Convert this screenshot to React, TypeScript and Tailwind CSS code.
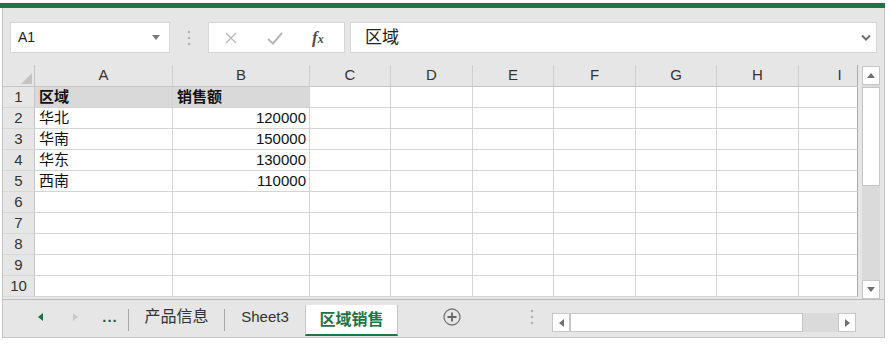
const cols = [
  { l: 'A', w: 'w-[138px]' },
  { l: 'B', w: 'w-[137px]' },
  { l: 'C', w: 'w-[81px]' },
  { l: 'D', w: 'w-[82px]' },
  { l: 'E', w: 'w-[81px]' },
  { l: 'F', w: 'w-[82px]' },
  { l: 'G', w: 'w-[81px]' },
  { l: 'H', w: 'w-[82px]' },
  { l: 'I', w: 'w-[59px]' },
];

const data = [
  ['区域', '销售额'],
  ['华北', '120000'],
  ['华南', '150000'],
  ['华东', '130000'],
  ['西南', '110000'],
];

const Tri = ({ dir, color }: { dir: 'up' | 'down' | 'left' | 'right'; color: string }) => {
  const pts = {
    up: '0,5 8,5 4,0',
    down: '0,0 8,0 4,5',
    left: '5,0 5,8 0,4',
    right: '0,0 0,8 5,4',
  }[dir];
  const horiz = dir === 'up' || dir === 'down';
  return (
    <svg width={horiz ? 8 : 5} height={horiz ? 5 : 8} viewBox={horiz ? '0 0 8 5' : '0 0 5 8'}>
      <polygon points={pts} fill={color} />
    </svg>
  );
};

const VDots = () => (
  <svg width="4" height="16" viewBox="0 0 4 16">
    <circle cx="2" cy="2" r="1.3" fill="#b4b4b4" />
    <circle cx="2" cy="8" r="1.3" fill="#b4b4b4" />
    <circle cx="2" cy="14" r="1.3" fill="#b4b4b4" />
  </svg>
);

const FormulaBar = () => (
  <div className="flex items-start h-[57px] pt-[14px] pl-[7px]">
    {/* 名称框 */}
    <div className="w-[160px] h-[31px] bg-white border border-[#d6d6d6] flex items-center justify-between pl-[7px] pr-[9px]">
      <span className="text-[14px] text-[#222]">A1</span>
      <Tri dir="down" color="#7a7a7a" />
    </div>
    <div className="w-[38px] h-[31px] flex items-center justify-center">
      <VDots />
    </div>
    <div className="w-[137px] h-[31px] bg-white border border-[#d6d6d6] flex items-center pl-[13px]">
      <svg width="18" height="18" viewBox="0 0 18 18">
        <path d="M4 4 L14 14 M14 4 L4 14" stroke="#b8b8b8" strokeWidth="1.4" fill="none" />
      </svg>
      <svg width="18" height="18" viewBox="0 0 18 18" className="ml-[26px]">
        <path d="M2 10 L7 14.5 L16 4" stroke="#b8b8b8" strokeWidth="2" fill="none" />
      </svg>
      <span className="ml-[28px] font-['Liberation_Serif',serif] italic font-bold text-[#505050] text-[17px] leading-none">
        f<span className="text-[12px]">x</span>
      </span>
    </div>
    <div className="ml-[5px] w-[527px] h-[31px] bg-white border border-[#d6d6d6] flex items-center justify-between pl-[14px] pr-[5px]">
      <span className="text-[17px] text-[#222]">区域</span>
      <svg width="10" height="7" viewBox="0 0 10 7">
        <path d="M1 1.5 L5 5.5 L9 1.5" stroke="#6e6e6e" strokeWidth="2" fill="none" />
      </svg>
    </div>
  </div>
);

const Grid = () => (
  <div className="w-[855px]">
    {/* 列标题 */}
    <div className="flex h-[22px] border-b border-[#c6c6c6]">
      <div className="w-[32px] border-r border-[#c6c6c6] flex items-end justify-end pr-[2px] pb-[2px]">
        <svg width="11" height="11" viewBox="0 0 11 11">
          <polygon points="0,11 11,11 11,0" fill="#c4c4c4" />
        </svg>
      </div>
      {cols.map((c, i) =>
        i === cols.length - 1 ? (
          <div key={c.l} className={`${c.w} border-r border-[#ababab] overflow-hidden`}>
            <div className="w-[81px] h-full flex items-center justify-center text-[15px] text-[#333]">{c.l}</div>
          </div>
        ) : (
          <div
            key={c.l}
            className={`${c.w} border-r border-[#cfcfcf] flex items-center justify-center text-[15px] text-[#333]`}
          >
            {c.l}
          </div>
        )
      )}
    </div>
    {Array.from({ length: 10 }).map((_, r) => (
      <div key={r} className="flex h-[21px]">
        <div className="w-[32px] border-r border-b border-r-[#c6c6c6] border-b-[#d8d8d8] flex items-center justify-center text-[15px] text-[#333]">
          {r + 1}
        </div>
        {cols.map((c, i) => {
          const v = data[r]?.[i];
          const fill = r === 0 && i < 2 ? 'bg-[#d9d9d9]' : 'bg-white';
          const bold = r === 0 ? 'font-bold' : '';
          const align = i === 1 && r > 0 ? 'justify-end pr-[3px]' : 'justify-start pl-[4px]';
          const right = i === cols.length - 1 ? 'border-r-[#ababab]' : 'border-r-[#d4d4d4]';
          return (
            <div
              key={c.l}
              className={`${c.w} ${fill} border-r border-b ${right} border-b-[#d4d4d4] flex items-center ${align} text-[15px] text-[#111] ${bold}`}
            >
              {v}
            </div>
          );
        })}
      </div>
    ))}
  </div>
);

const VScroll = () => (
  <div className="w-[26px] pl-[4px] pt-[1px] flex flex-col">
    <div className="w-[18px] h-[19px] bg-white border border-[#c6c6c6] flex items-center justify-center">
      <Tri dir="up" color="#6f6f6f" />
    </div>
    <div className="w-[18px] h-[195px] bg-[#dadada] flex flex-col">
      <div className="w-[18px] h-[99px] mt-[2px] bg-white border border-[#c6c6c6]" />
    </div>
    <div className="w-[18px] h-[19px] bg-white border border-[#c6c6c6] flex items-center justify-center">
      <Tri dir="down" color="#6f6f6f" />
    </div>
  </div>
);

const TabBar = () => (
  <div className="flex items-start h-[38px] border-t border-[#bdbdbd]">
    <div className="w-[27px]" />
    <div className="w-[20px] h-[34px] flex items-center justify-center">
      <Tri dir="left" color="#1f6e43" />
    </div>
    <div className="ml-[15px] w-[20px] h-[34px] flex items-center justify-center">
      <Tri dir="right" color="#c8c8c8" />
    </div>
    <div className="ml-[10px] w-[30px] h-[34px] flex items-center justify-center text-[15px] font-bold text-[#2d5a3e] tracking-[1px]">
      ...
    </div>
    <div className="ml-[3px] w-px h-[22px] mt-[9px] bg-[#a8a8a8]" />
    <div className="w-[95px] h-[34px] flex items-center justify-center text-[16px] text-[#333]">产品信息</div>
    <div className="w-px h-[22px] mt-[9px] bg-[#a8a8a8]" />
    <div className="w-[80px] h-[34px] flex items-center justify-center text-[15px] text-[#333]">Sheet3</div>
    <div className="w-[93px] h-[31px] mt-[5px] bg-white border-x border-[#c6c6c6] border-b-2 border-b-[#217346] flex items-center justify-center text-[16px] font-bold text-[#217346]">
      区域销售
    </div>
    <div className="ml-[42px] w-[24px] h-[34px] flex items-center justify-center">
      <svg width="18" height="18" viewBox="0 0 18 18">
        <circle cx="9" cy="9" r="8" stroke="#777" strokeWidth="1.3" fill="none" />
        <path d="M9 4.5 V13.5 M4.5 9 H13.5" stroke="#666" strokeWidth="1.8" />
      </svg>
    </div>
    <div className="ml-[60px] w-[16px] h-[34px] flex items-center justify-center">
      <VDots />
    </div>
    <div className="ml-[12px] mt-[13px] flex h-[19px]">
      <div className="w-[18px] h-[19px] bg-white border border-[#c6c6c6] flex items-center justify-center">
        <Tri dir="left" color="#6f6f6f" />
      </div>
      <div className="w-[233px] h-[19px] bg-white border border-[#c6c6c6]" />
      <div className="w-[35px] h-[19px] bg-[#dadada]" />
      <div className="w-[18px] h-[19px] bg-white border border-[#c6c6c6] flex items-center justify-center">
        <Tri dir="right" color="#6f6f6f" />
      </div>
    </div>
  </div>
);

export default function App() {
  return (
    <div className="w-[888px] h-[345px] bg-white overflow-hidden font-['Liberation_Sans','Noto_Sans_CJK_SC',sans-serif]">
      <div className="w-[885px]">
        <div className="h-[3px]" />
        <div className="h-[5px] bg-[#217346]" />
        <div className="ml-[2px] w-[883px] border-x border-b border-[#c4c4c4] bg-[#e6e6e6]">
          <FormulaBar />
          <div className="flex">
            <Grid />
            <VScroll />
          </div>
          <TabBar />
        </div>
      </div>
    </div>
  );
}
